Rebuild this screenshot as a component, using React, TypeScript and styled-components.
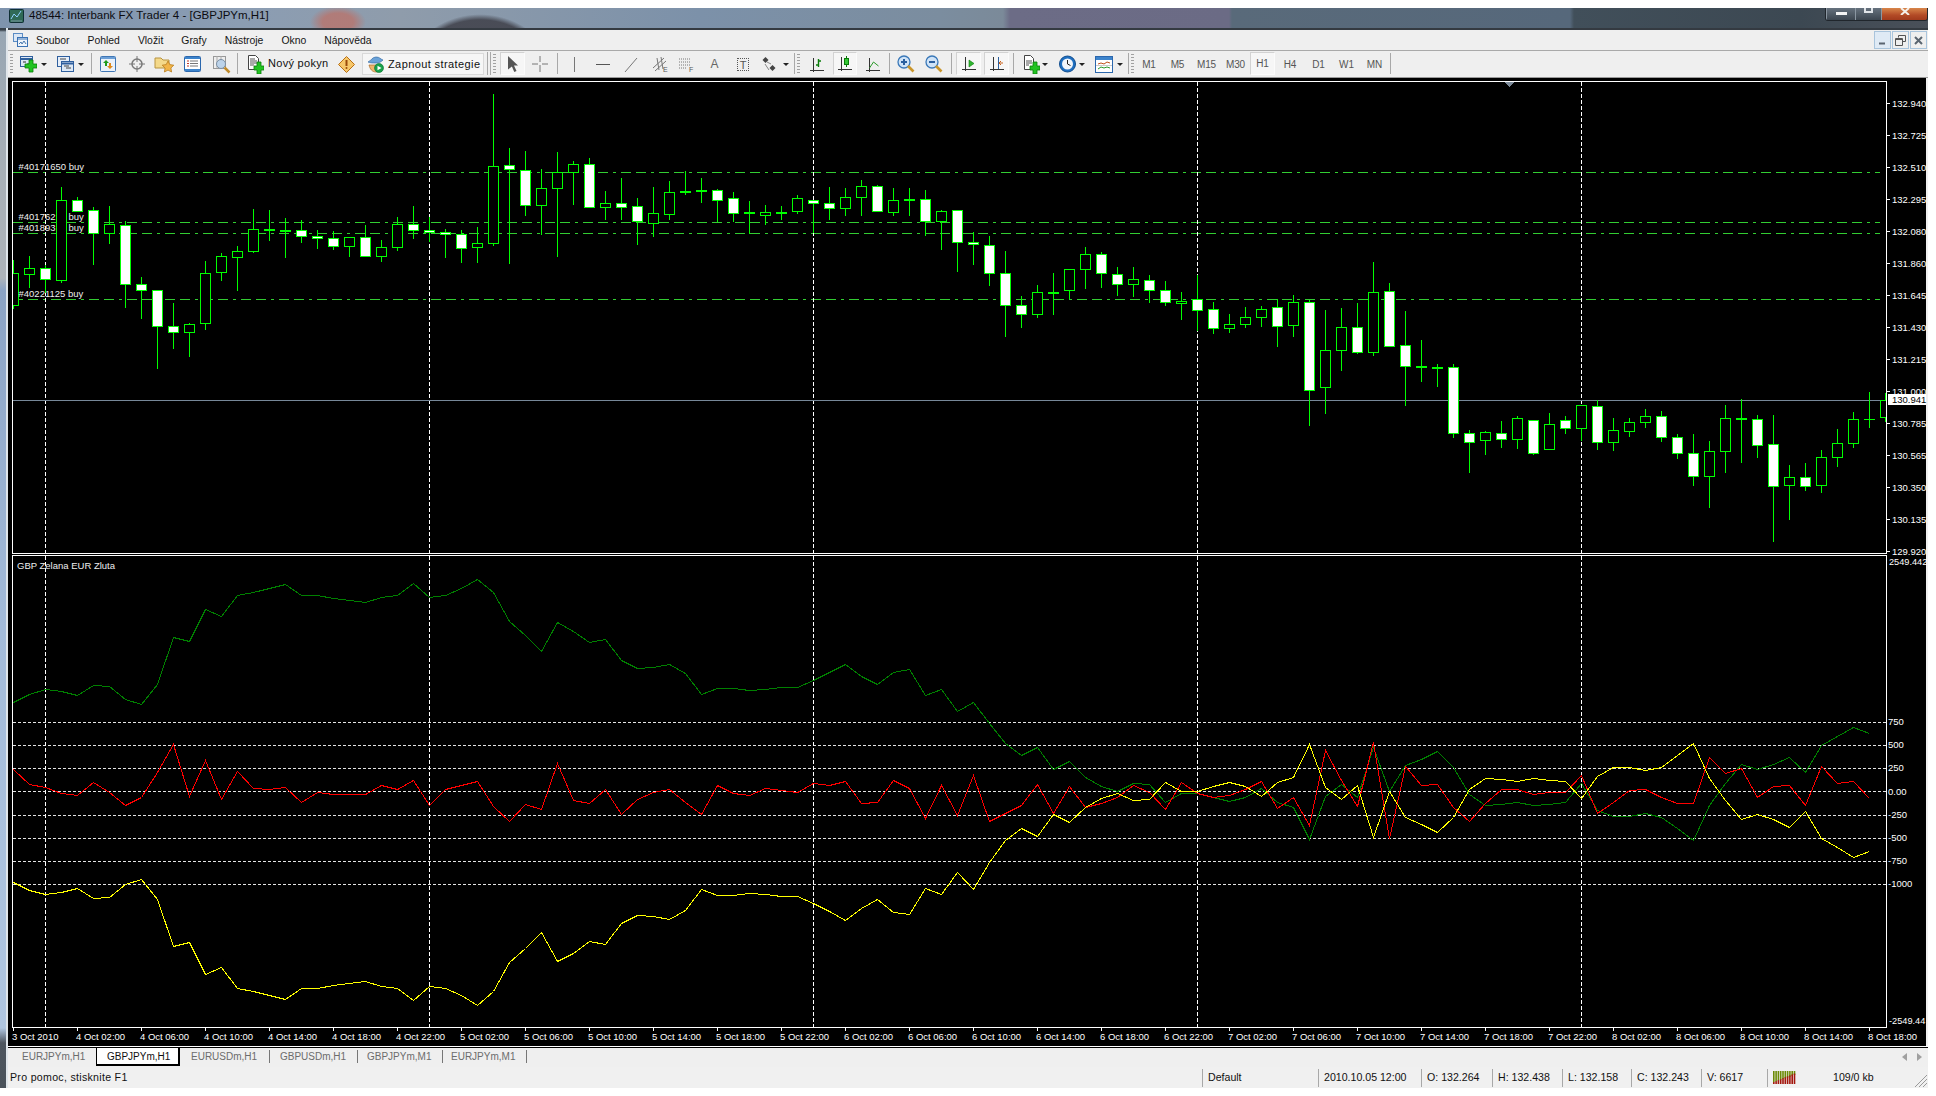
import React from "react";
import styled, { createGlobalStyle } from "styled-components";

const GlobalStyle = createGlobalStyle`
  html, body { margin: 0; padding: 0; background: #fff; }
  body { width: 1936px; height: 1096px; overflow: hidden; font-family: "Liberation Sans", Arial, sans-serif; }
  #root { width: 1936px; height: 1096px; overflow: hidden; padding-top: 8px; box-sizing: border-box; }
`;

/* ---------- chart data: [wick top, wick bottom, body top, body bottom, filled] ---------- */
type C = [number, number, number, number, number];
const A: C[] = [
  [540,688,580,674,0],[528,625,563,581,0],[555,640,563,598,1],[322,608,361,599,0],[352,395,361,392,1],
  [380,555,389,458,1],[378,492,433,460,0],[424,684,436,613,1],[592,717,613,631,1],[631,866,631,739,1],
  [670,807,739,757,1],[730,830,733,757,0],[544,750,580,730,0],[520,603,529,577,0],[499,633,514,532,0],
  [388,519,448,514,0],[391,483,448,451,1],[415,534,451,452,1],[421,489,451,469,1],[451,507,469,475,1],
  [454,510,475,499,1],[472,531,472,499,0],[436,530,472,529,1],[481,546,502,529,0],[412,513,433,502,0],
  [378,477,433,451,1],[410,485,451,457,1],[448,534,457,463,1],[451,549,463,505,1],[442,549,490,502,0],
  [42,497,259,490,0],[205,552,256,268,1],[214,408,271,376,1],[268,465,325,376,0],[217,531,277,325,0],
  [244,375,253,277,0],[235,385,253,382,1],[334,420,370,382,0],[295,420,370,382,1],[355,496,379,424,1],
  [322,470,400,428,0],[304,420,337,401,0],[274,344,334,337,1],[295,369,331,334,1],[328,427,331,361,1],
  [337,427,355,400,1],[364,461,397,400,1],[376,434,397,406,0],[379,420,397,398,1],[346,402,355,394,0],
  [361,460,361,370,1],[322,420,370,385,1],[325,408,352,385,0],[301,408,319,352,0],[316,395,319,394,1],
  [325,408,361,397,0],[325,408,358,361,1],[331,467,358,424,1],[391,510,394,424,0],[391,576,391,487,1],
  [457,555,487,493,1],[469,618,496,580,1],[514,771,580,676,1],[649,744,676,703,1],[616,714,637,703,0],
  [580,705,637,640,1],[568,658,568,631,0],[502,627,523,568,0],[517,624,523,580,1],[562,648,583,613,1],
  [562,651,598,613,0],[586,669,601,631,1],[604,678,631,667,1],[637,720,664,670,0],[586,753,658,691,1],
  [667,762,688,745,1],[703,759,733,745,0],[682,744,712,733,0],[679,741,688,712,0],[658,800,682,739,1],
];
const B: C[] = [
  [106,231,127,196,0],[120,497,127,391,1],[150,461,271,382,0],[145,333,202,271,0],[130,281,202,277,1],
  [7,287,97,277,0],[70,260,94,259,1],[154,437,256,319,1],[241,365,319,322,1],[313,380,322,323,1],
  [313,533,322,520,1],[511,638,520,547,1],[514,584,517,541,0],[484,564,520,538,1],[469,567,475,538,0],
  [481,584,481,580,1],[460,569,493,568,0],[469,521,481,505,1],[436,544,436,505,0],[421,569,439,547,1],
  [475,572,511,547,0],[475,530,487,514,0],[448,503,469,487,0],[454,545,469,532,1],[523,596,532,580,1],
  [523,677,580,649,1],[544,743,574,649,0],[436,638,475,574,0],[418,608,475,476,1],[466,593,478,556,1],
  [466,845,553,679,1],[616,779,652,676,0],[610,692,652,679,1],[571,698,592,676,0],[508,621,550,592,0],
  [457,563,478,550,0],[397,503,476,478,1],[400,485,421,472,0],
];
const toY = (base: number, v: number) => Math.round(base + v / 3);
const candles: C[] = [
  ...A.map((c): C => [toY(80, c[0]), toY(80, c[1]), toY(80, c[2]), toY(80, c[3]), c[4]]),
  ...B.map((c): C => [toY(260, c[0]), toY(260, c[1]), toY(260, c[2]), toY(260, c[3]), c[4]]),
];

const g1 = [455,432,418,423,435,406,409,448,463,402,262,273,178,199,135,127,114,102,135,135,144,150,157,142,135,100,142,135,115,86,125,214,255,304,216,242,277,268,331,354,352,343,370,433,414,414,421,418,412,412,391,367,342,378,402,366,358,436,418,484];
const g2 = [5,70,128,165,140,206,183,230,258,272,250,253,305,280,280,292,304,292,264,305,320,418,288,252,290,140,272,195,177,153,200,283,316,313,307,316,311,307,250,330,349,348,340,350,385,420,316,250,193,207,191,172,217,135,108,82,100];
const r1 = [658,703,712,729,736,697,727,766,741,665,582,739,630,748,664,715,716,711,757,726,733,733,733,706,718,690,766,717,704,693,767,814,763,777,640,751,760,718,792,747,727,718,755,792,705,729,734,715,720,727,700,706,694,760,755,689,715,805,706,795];
const r2 = [225,362,340,315,252,340,257,322,308,290,256,276,328,247,280,290,286,268,243,324,292,375,150,240,317,126,415,198,256,252,322,362,310,268,268,281,277,277,225,340,306,270,268,290,310,310,171,220,205,290,258,255,315,198,250,243,293];
const y1 = [997,1021,1033,1026,1015,1045,1041,1003,988,1048,1188,1177,1273,1252,1315,1324,1336,1348,1315,1315,1306,1300,1294,1309,1315,1351,1309,1315,1336,1365,1324,1237,1195,1147,1234,1208,1174,1183,1120,1096,1099,1108,1081,1018,1036,1036,1030,1033,1039,1039,1060,1083,1110,1073,1048,1085,1093,1015,1033,966];
const y2 = [568,485,420,384,409,343,366,320,294,280,300,298,246,272,272,258,246,258,288,245,230,132,262,298,256,410,274,352,372,397,350,268,235,238,244,235,240,244,295,228,202,202,211,200,165,130,235,300,358,343,358,380,334,415,442,470,452];
const series = (a: number[], b: number[]) =>
  [...a.map((v) => 550 + v / 3), ...b.map((v) => 700 + v / 3)]
    .map((y, i) => `${13.5 + 16 * i},${Math.round(y) + 0.5}`)
    .join(" ");

const grids = [45.5, 429.5, 813.5, 1197.5, 1581.5];
const orderLines = [172, 222, 233, 299];
const levels = [722, 745, 768, 791, 815, 838, 861, 884];
const prices = ["132.940","132.725","132.510","132.295","132.080","131.860","131.645","131.430","131.215","131.000","130.785","130.565","130.350","130.135","129.920"];
const indLabels: [string, number][] = [["750",23],["500",23],["250",23],["0.00",24],["-250",23],["-500",23],["-750",23],["-1000",23]];
const times = ["3 Oct 2010",
  ...["4","5","6","7"].flatMap((d) => ["02","06","10","14","18","22"].map((h) => `${d} Oct ${h}:00`)),
  ...["02","06","10","14","18"].map((h) => `8 Oct ${h}:00`),
];

/* ---------- layout ---------- */
const Shell = styled.div`
  width: 1928px; height: 1080px; display: flex; flex-direction: column; overflow: hidden;
`;
const TitleBar = styled.div`
  height: 20px; flex: none; display: flex; align-items: flex-start; padding-left: 9px; box-sizing: border-box;
  background:
    radial-gradient(ellipse 28px 16px at 338px 14px, rgba(178,122,118,.95) 0 55%, rgba(178,122,118,0) 100%),
    radial-gradient(ellipse 80px 70px at 480px 72px, rgba(70,72,82,0) 0 62%, rgba(70,72,82,.95) 68% 86%, rgba(70,72,82,0) 94%),
    linear-gradient(90deg, #7e93ad 0, #8b9db3 240px, #8f9cab 400px, #7c91a9 700px, #7b8d9f 940px, #7b8a99 1003px, #6c6c86 1010px, #6b6b85 1229px, #596a7a 1232px, #56687b 1570px, #414f5a 1574px, #3c4852 1800px, #4a5059 1928px);
`;
const AppIcon = styled.svg`width: 15px; height: 14px; flex: none; margin-top: 1px;`;
const TitleText = styled.div`
  margin-left: 5px; font-size: 11.5px; line-height: 15px; color: #0c0c10; white-space: nowrap;
`;
const WinButtons = styled.div`
  margin-left: auto; display: flex; height: 12px; border: 1px solid #20262c; border-top: 0;
  border-radius: 0 0 3px 3px; overflow: hidden;
`;
const WinBtn = styled.div<{ $w: number; $bg: string }>`
  width: ${(p) => p.$w}px; height: 100%; background: ${(p) => p.$bg};
  border-left: 1px solid #8b97a2; box-sizing: border-box; display: flex; justify-content: center;
`;
const WinDash = styled.i`width: 11px; height: 3px; background: #f3f3f3; margin-top: 4px;`;
const WinSquare = styled.i`width: 9px; height: 5px; border: 2px solid #e0e4e8; border-top: 0; box-sizing: border-box;`;
const WinClose = styled.svg`width: 12px; height: 7px; flex: none;`;
const Body = styled.div`flex: 1; min-height: 0; display: flex;`;
const LeftFrame = styled.div`
  width: 8px; flex: none; box-sizing: border-box; border-right: 2px solid #dfe5ea;
  background: linear-gradient(180deg, #39424c 0, #39424c 2px, #98a6b3 4px, #a5aeb6 120px, #aeb4ba 250px, #8ba3c4 262px, #a3bbd9 600px, #b0c6e0 1000px, #4d555e 1015px, #4a525b 100%);
`;
const Main = styled.div`flex: 1; min-width: 0; display: flex; flex-direction: column;`;
const MenuBar = styled.div`
  height: 23px; flex: none; box-sizing: border-box; padding: 2px 1px 0 5px; display: flex; align-items: flex-start;
  background: #efefef; border-top: 2px solid #343a41; border-bottom: 1px solid #a9a9a9;
`;
const MenuIcon = styled.svg`width: 15px; height: 15px; margin: 1px 8px 0 0; flex: none;`;
const MenuItems = styled.div`display: flex; gap: 18px; font-size: 10.4px; line-height: 17px; color: #151515; height: 17px;`;
const MdiButtons = styled.div`margin-left: auto; display: flex; gap: 1px; margin-top: -1px;`;
const MdiBtn = styled.div<{ $active?: boolean }>`
  width: 17px; height: 18px; box-sizing: border-box; border: 1px solid #a9c4dc;
  background: ${(p) => (p.$active ? "#dfeaf5" : "#efefef")};
  display: flex; align-items: center; justify-content: center;
`;
const Toolbar = styled.div`
  height: 27px; flex: none; box-sizing: border-box; display: flex; align-items: stretch;
  background: #efefef; border-bottom: 1px solid #9a9a9a;
`;
const Cell = styled.div<{ $w: number }>`
  width: ${(p) => p.$w}px; flex: none; display: flex; align-items: center; justify-content: center;
`;
const Gap = styled.div<{ $w: number }>`width: ${(p) => p.$w}px; flex: none;`;
const Sep = styled.div`width: 1px; flex: none; margin: 2px 0 3px; background: #a8a8a8;`;
const DoubleSep = styled.div`
  width: 4px; flex: none; margin: 1px 0 2px; border-left: 1px solid #a8a8a8; border-right: 1px solid #a8a8a8; box-sizing: border-box;
`;
const Grip = styled.div`
  width: 3px; flex: none; margin: 3px 0 4px;
  background: repeating-linear-gradient(180deg, #a0a0a0 0 1px, transparent 1px 3px);
`;
const Pressed = styled.div<{ $w: number }>`
  width: ${(p) => p.$w}px; flex: none; box-sizing: border-box; margin: 1px 0 2px;
  display: flex; align-items: center; justify-content: center;
  background: #f6f6f6; border: 1px solid #d2d2d2; border-right-color: #fbfbfb; border-bottom-color: #fbfbfb;
`;
const ToolLabel = styled.div`
  width: 60px; flex: none; font-size: 11px; line-height: 25px; color: #111; white-space: nowrap; letter-spacing: .3px;
`;
const StrategyBtn = styled.div`
  width: 122px; flex: none; margin: 2px 0 2px; box-sizing: border-box; display: flex; align-items: center;
  padding-left: 4px; gap: 4px; background: #f6f6f6; border: 1px solid #d9d9d9;
  font-size: 11px; color: #111; white-space: nowrap; letter-spacing: .4px;
`;
const Drop = styled.i`
  width: 0; height: 0; border-left: 3px solid transparent; border-right: 3px solid transparent; border-top: 3px solid #222;
`;
const Frame = styled.div`
  flex: none; height: 968px; width: 1920px; box-sizing: border-box; display: flex; flex-direction: column;
  background: #000; border-right: 2px solid #f0f0f0; padding: 3px 0 0 4px;
`;
const Pane = styled.div<{ $gap?: number }>`
  height: 473px; flex: none; display: flex; margin-top: ${(p) => p.$gap ?? 0}px;
`;
const Plot = styled.div`
  width: 1875px; height: 473px; flex: none; box-sizing: border-box; border: 1px solid #fff;
`;
const PlotSvg = styled.svg`
  display: block; width: 1873px; height: 471px;
  text { font-family: "Liberation Sans", Arial, sans-serif; font-size: 9.5px; fill: #eee; }
`;
const PriceAxis = styled.div`
  width: 39px; flex: none; padding-top: 6px; box-sizing: border-box; position: relative;
  display: flex; flex-direction: column;
`;
const PriceRow = styled.div`
  height: 32px; flex: none; display: flex; align-items: center; font-size: 9.5px; color: #fff; white-space: nowrap;
  &::before { content: ""; width: 3px; height: 1px; background: #fff; margin-right: 2px; flex: none; }
`;
const PriceTag = styled.div`
  position: absolute; left: 1px; right: 0; top: 313px; height: 11px; background: #fff; color: #000;
  font-size: 9.5px; line-height: 11px; padding-left: 4px;
`;
const IndAxis = styled.div`
  width: 39px; flex: none; box-sizing: border-box; display: flex; flex-direction: column;
  font-size: 9.5px; color: #fff; white-space: nowrap;
`;
const IndHead = styled.div<{ $bottom?: boolean }>`
  height: 14px; flex: none; line-height: 14px; padding-left: 2px; font-size: 9.2px;
  margin-top: ${(p) => (p.$bottom ? "auto" : "0")};
  margin-bottom: ${(p) => (p.$bottom ? "0" : "141px")};
`;
const IndRow = styled.div<{ $h: number }>`
  height: ${(p) => p.$h}px; flex: none; display: flex; align-items: center; padding-left: 1px;
`;
const TimeAxis = styled.div`
  height: 18px; flex: none; display: flex; padding-left: 1px; font-size: 9.5px; color: #fff; white-space: nowrap;
`;
const TimeCell = styled.div`
  width: 64px; flex: none; position: relative; line-height: 16px; padding-top: 1px; box-sizing: border-box; text-indent: -1px;
  &::before { content: ""; position: absolute; left: 0; top: 0; width: 1px; height: 3px; background: #fff; }
  &:last-child { width: 54px; }
`;
const TabBar = styled.div`
  height: 21px; flex: none; box-sizing: border-box; display: flex;
  background: #efefef; border-top: 1px solid #fff; box-shadow: inset 0 1px 0 #000; padding-top: 1px;
`;
const Tab = styled.div<{ $w: number; $pl: number; $active?: boolean }>`
  width: ${(p) => p.$w}px; padding-left: ${(p) => p.$pl}px; flex: none; box-sizing: border-box; height: 18px;
  font-size: 10px; line-height: 17px; white-space: nowrap;
  color: ${(p) => (p.$active ? "#101010" : "#6c6c6c")};
  background: ${(p) => (p.$active ? "#fff" : "transparent")};
  border-left: ${(p) => (p.$active ? "1px solid #000" : "0")};
  border-right: ${(p) => (p.$active ? "2px solid #000" : "0")};
  border-bottom: ${(p) => (p.$active ? "2px solid #000" : "0")};
`;
const TabSep = styled.div`width: 1px; flex: none; height: 13px; margin-top: 2px; background: #777;`;
const TabArrows = styled.div`
  margin-left: auto; display: flex; gap: 10px; padding: 5px 6px 0 0;
`;
const ArrowL = styled.i`
  width: 0; height: 0; border-top: 4px solid transparent; border-bottom: 4px solid transparent; border-right: 5px solid #a0a0a0;
`;
const ArrowR = styled.i`
  width: 0; height: 0; border-top: 4px solid transparent; border-bottom: 4px solid transparent; border-left: 5px solid #a0a0a0;
`;
const StatusBar = styled.div`
  height: 21px; flex: none; display: flex; background: #f0f0f0; font-size: 10.6px; line-height: 21px; color: #111; white-space: nowrap;
`;
const StatusMain = styled.div`width: 1194px; flex: none; padding-left: 2px; box-sizing: border-box; letter-spacing: .3px;`;
const StatusCell = styled.div<{ $w: number }>`
  width: ${(p) => p.$w}px; flex: none; box-sizing: border-box; padding-left: 6px; position: relative;
  &::before { content: ""; position: absolute; left: 0; top: 2px; bottom: 1px; width: 1px; background: #a8a8a8; }
`;
const StatusMeter = styled(StatusCell)`display: flex; align-items: center; gap: 37px;`;
const Resize = styled.svg`margin-left: auto; width: 15px; height: 15px; align-self: flex-end;`;
const LetterA = styled.span`font: 12px "Liberation Sans", sans-serif; color: #666;`;
const LetterT = styled.span`
  font: 11px/12px "Liberation Sans", sans-serif; color: #555; width: 12px; height: 13px; text-align: center;
  border: 1px dotted #555; box-sizing: border-box;
`;
const Tf = styled.span`font-size: 10px; color: #555; letter-spacing: -.1px;`;
const IconSvg = styled.svg`flex: none; display: block;`;

/* ---------- icons ---------- */
const Ico = ({ w = 18, h = 18, children }: { w?: number; h?: number; children: React.ReactNode }) => (
  <IconSvg width={w} height={h} viewBox={`0 0 ${w} ${h}`} fill="none">{children}</IconSvg>
);
const Plus = ({ x, y }: { x: number; y: number }) => (
  <path d={`M${x - 2} ${y - 6}h4v4h4v4h-4v4h-4v-4h-4v-4h4z`} fill="#22c322" stroke="#0b7d0b" strokeWidth=".8" />
);
const AddChart = () => (
  <Ico><rect x="1.5" y="1.5" width="12" height="10" fill="#dce8f6" stroke="#2f5f9e" /><path d="M1.5 4h12" stroke="#2f5f9e" strokeWidth="2" /><path d="M4 7h3M8 9h3" stroke="#333" /><Plus x={12} y={11} /></Ico>
);
const Profiles = () => (
  <Ico><rect x="1.5" y="1.5" width="12" height="10" fill="#e6eef8" stroke="#2f5f9e" /><rect x="5.5" y="6.5" width="12" height="10" fill="#dce8f6" stroke="#2f5f9e" /><path d="M5.5 8.5h12" stroke="#2f5f9e" strokeWidth="2" /><path d="M8 11h5M10 13h5M4 4h6" stroke="#444" /></Ico>
);
const Market = () => (
  <Ico w={16} h={17}><rect x=".5" y=".5" width="15" height="15" rx="1" fill="#eaf1fa" stroke="#3f76b5" /><path d="M1 1h14v2H1z" fill="#6c9fd6" /><path d="M6 4l3 3H7v3H5V7H3z" fill="#1e9a1e" /><path d="M10 13l3-3h-2V7H9v3H7z" fill="#e08a1c" /></Ico>
);
const Crosshair = () => (
  <Ico w={16} h={16}><circle cx="8" cy="8" r="5" stroke="#7a7a7a" strokeWidth="1.5" /><path d="M8 0v6M8 10v6M0 8h6M10 8h6" stroke="#777" /></Ico>
);
const FolderStar = () => (
  <Ico w={20} h={18}><path d="M1 3h6l2 2h6v8H1z" fill="#f4d98a" stroke="#b89440" /><path d="M14 6l1.800 3.600 4 .6-2.900 2.800.7 4-3.600-1.900L10.400 17l.7-4-2.900-2.800 4-.6z" fill="#f2b548" stroke="#b97e1e" strokeWidth=".8" /></Ico>
);
const TerminalIco = () => (
  <Ico w={17} h={17}><rect x=".5" y=".5" width="16" height="15" rx="1" fill="#fff" stroke="#2b67ad" /><path d="M1 1h15v2H1zM1 13h15v2H1z" fill="#3d84cc" /><path d="M3 5h2M3 7.500h2M3 10h2" stroke="#c0392b" /><path d="M6 5h8M6 7.500h8M6 10h8" stroke="#777" /></Ico>
);
const Tester = () => (
  <Ico w={19} h={19}><rect x="1.500" y="1.500" width="12" height="12" fill="#eee" stroke="#999" /><path d="M5 1v12M9 1v12" stroke="#aaa" /><circle cx="9" cy="9" r="4.500" fill="#bcd3ea" stroke="#7a8ea3" /><path d="M12.500 12.500l5 5" stroke="#c08a2a" strokeWidth="2.500" /></Ico>
);
const NewOrder = () => (
  <Ico w={17} h={19}><path d="M1.500 .5h7l3 3v11h-10z" fill="#fff" stroke="#444" /><path d="M3 4h5M3 6h7M3 8h7M3 10h4" stroke="#555" /><path d="M10 7h4v4h3v4h-3v4h-4v-4H7v-4h3z" fill="#22c322" stroke="#0b7d0b" strokeWidth=".8" /></Ico>
);
const Diamond = () => (
  <Ico w={17} h={17}><path d="M8.500 .5l8 8-8 8-8-8z" fill="#f6c76a" stroke="#b86f14" /><path d="M8.500 4v6" stroke="#9a4a0a" strokeWidth="2" /><circle cx="8.500" cy="12" r="1" fill="#9a4a0a" /></Ico>
);
const Strategy = () => (
  <Ico w={17} h={17}><path d="M2 9c1 4 3 7 7 7s5-3 5-7z" fill="#efb56c" stroke="#a86a28" strokeWidth=".7" /><path d="M1 6c3-1 4-5 8-5s4 2 7 3c-2 2-4 3-7 3S3 7 1 6z" fill="#6aa2d8" stroke="#3a6ea8" strokeWidth=".7" /><circle cx="12" cy="12" r="4.500" fill="#17a14a" stroke="#0c6e2d" strokeWidth=".6" /><path d="M10.500 9.800l4 2.200-4 2.200z" fill="#fff" /></Ico>
);
const Cursor = () => (
  <Ico w={12} h={17}><path d="M1 1l10 9.500H7l2.500 5.500-2.200 1-2.400-5.600L1 14.500z" fill="#555" /></Ico>
);
const Cross = () => (<Ico w={16} h={16}><path d="M8 0v6M8 9v7M0 8h6M10 8h6" stroke="#777" /></Ico>);
const VLine = () => (<Ico w={3} h={15}><path d="M1.500 0v15" stroke="#777" /></Ico>);
const HLine = () => (<Ico w={14} h={3}><path d="M0 1.500h14" stroke="#555" /></Ico>);
const Trend = () => (<Ico w={14} h={15}><path d="M1 15L13 1" stroke="#777" /></Ico>);
const Channel = () => (
  <Ico w={16} h={16}><path d="M1 12L12 2M3 15L14 5M5 2l2 12M9 1l2 12" stroke="#777" /><text x="11" y="16" fontSize="7" fill="#555" fontFamily="Liberation Sans">E</text></Ico>
);
const Fibo = () => (
  <Ico w={16} h={16}><path d="M1 3h12M1 6h12M1 9h12M1 12h8" stroke="#777" strokeDasharray="1 1" /><text x="11" y="16" fontSize="7" fill="#555" fontFamily="Liberation Sans">F</text></Ico>
);
const Shapes = () => (
  <Ico w={14} h={15}><path d="M3.500 0l3 3-3 3-3-3z" fill="#444" /><path d="M10.500 8l3 3-3 3-3-3z" fill="#444" /><path d="M3 7l4 6M5 5l4 2" stroke="#888" /></Ico>
);
const Axes = () => (<path d="M3.500 1v14M0 13.500h14" stroke="#333" strokeWidth="1" />);
const BarChart = () => (<Ico w={14} h={15}><Axes /><path d="M8.500 2v8M6 8h2.500M8.500 4H11" stroke="#0a7d0a" strokeWidth="1.400" /></Ico>);
const CandleIco = () => (<Ico w={14} h={15}><Axes /><path d="M8.500 0v11" stroke="#0a7d0a" /><rect x="6.500" y="2.500" width="4" height="6" fill="#35c835" stroke="#0a7d0a" /></Ico>);
const LineChart = () => (<Ico w={14} h={15}><Axes /><path d="M3.500 11l4-6 5 4" stroke="#2a9a2a" /></Ico>);
const Zoom = ({ minus }: { minus?: boolean }) => (
  <Ico w={18} h={18}><circle cx="7" cy="7" r="6" fill="#cfe3f7" stroke="#3a78b8" strokeWidth="1.300" /><path d={minus ? "M4 7h6" : "M4 7h6M7 4v6"} stroke="#2a5f9e" strokeWidth="2" /><path d="M11 11l5.500 5.500" stroke="#c9952b" strokeWidth="2.600" /></Ico>
);
const AutoScroll = () => (<Ico w={14} h={15}><Axes /><path d="M7 4l5 3.500-5 3.500z" fill="#2fb52f" stroke="#0a7d0a" strokeWidth=".6" /></Ico>);
const Shift = () => (<Ico w={14} h={15}><Axes /><path d="M8.500 1v12" stroke="#2a5f9e" /><path d="M13 7H9l2-2M9 7l2 2" stroke="#c8601a" /></Ico>);
const NewDoc = () => (
  <Ico w={17} h={19}><path d="M1.500 .5h6l3 3v11h-9z" fill="#fff" stroke="#444" /><path d="M3 6h6M3 8h6M3 10h3" stroke="#555" /><path d="M10 7h4v4h3v4h-3v4h-4v-4H7v-4h3z" fill="#22c322" stroke="#0b7d0b" strokeWidth=".8" /></Ico>
);
const Clock = () => (
  <Ico w={17} h={18}><circle cx="8.500" cy="9" r="8" fill="#1f6fc1" stroke="#144f8e" /><circle cx="8.500" cy="9" r="5.500" fill="#f2f6fb" /><path d="M8.500 5v4l3 1.500" stroke="#222" /></Ico>
);
const Template = () => (
  <Ico w={18} h={17}><rect x=".5" y=".5" width="17" height="16" fill="#fff" stroke="#2b67ad" /><path d="M1 1h16v3H1z" fill="#3d84cc" /><path d="M3 8l3-1 3 1 3-2 3 1" stroke="#c0501a" /><path d="M3 13l3-2 3 1 3-1 3 1" stroke="#2a9a2a" /><path d="M1 9.500h16" stroke="#ccc" /></Ico>
);
const Meter = () => (
  <IconSvg width="23" height="13" viewBox="0 0 23 13">
    {Array.from({ length: 10 }).map((_, i) => (
      <g key={i}>
        <rect x={i * 2.3} y={0} width={1.6} height={13 - (i + 1) * 0.8 - 1} fill="#6c8a06" />
        <rect x={i * 2.3} y={13 - (i + 1) * 0.95 - 1} width={1.6} height={(i + 1) * 0.95 + 1} fill="#a3160c" />
      </g>
    ))}
  </IconSvg>
);

/* ---------- chart panes ---------- */
const MainChart = () => (
  <PlotSvg viewBox="13 82 1873 471" shapeRendering="crispEdges">
    {orderLines.map((y) => (
      <line key={y} x1={13} x2={1880} y1={y + 0.5} y2={y + 0.5} stroke="#32cd32" strokeDasharray="10 5 10 5 3 5" />
    ))}
    {grids.map((x) => (
      <line key={x} x1={x} x2={x} y1={82} y2={553} stroke="#fff" strokeDasharray="4 2" />
    ))}
    <line x1={13} x2={1886} y1={400.5} y2={400.5} stroke="#778899" />
    <path d="M1504 82h10l-5 5z" fill="#7d8b9a" />
    {candles.map((c, i) => {
      const x = 13.5 + 16 * i;
      const thin = c[3] - c[2] < 2;
      return (
        <g key={i}>
          <line x1={x} x2={x} y1={c[0]} y2={c[1]} stroke="#00ff00" />
          {thin ? (
            <rect x={x - 5.5} y={c[2]} width={11} height={Math.max(1, c[3] - c[2] + 1)} fill="#00ff00" />
          ) : (
            <rect x={x - 5} y={c[2] + 0.5} width={10} height={c[3] - c[2]} fill={c[4] ? "#fff" : "#000"} stroke="#00ff00" />
          )}
        </g>
      );
    })}
    <text x={18.5} y={170}>#40171650 buy</text>
    <text x={18.5} y={220}>#401762</text><text x={68.5} y={220}>buy</text>
    <text x={18.5} y={231}>#401893</text><text x={68.5} y={231}>buy</text>
    <text x={18.5} y={297}>#40221125 buy</text>
  </PlotSvg>
);

const IndicatorChart = () => (
  <PlotSvg viewBox="13 556 1873 471" shapeRendering="crispEdges">
    {levels.map((y) => (
      <line key={y} x1={13} x2={1886} y1={y + 0.5} y2={y + 0.5} stroke="#e4e4e4" strokeDasharray="3 2" />
    ))}
    {grids.map((x) => (
      <line key={x} x1={x} x2={x} y1={556} y2={1027} stroke="#fff" strokeDasharray="4 2" />
    ))}
    <polyline points={series(g1, g2)} fill="none" stroke="#008000" />
    <polyline points={series(r1, r2)} fill="none" stroke="#ff0000" />
    <polyline points={series(y1, y2)} fill="none" stroke="#ffff00" />
    <text x={17} y={569}>GBP Zelana EUR Zluta</text>
  </PlotSvg>
);

export default function App() {
  return (
    <>
      <GlobalStyle />
      <Shell>
        <TitleBar>
          <AppIcon viewBox="0 0 15 14">
            <rect x=".5" y=".5" width="14" height="13" rx="1" fill="#2f6a56" stroke="#0f2f35" />
            <path d="M2 10l3-5 3 3 4-6" stroke="#8fd0ff" fill="none" />
            <path d="M2 12h11" stroke="#7f9aa8" />
          </AppIcon>
          <TitleText>48544: Interbank FX Trader 4 - [GBPJPYm,H1]</TitleText>
          <WinButtons>
            <WinBtn $w={29} $bg="linear-gradient(180deg,#66727e,#3c4650)"><WinDash /></WinBtn>
            <WinBtn $w={26} $bg="linear-gradient(180deg,#66727e,#3c4650)"><WinSquare /></WinBtn>
            <WinBtn $w={46} $bg="linear-gradient(180deg,#d8864a,#b24a26 60%,#a03a1c)">
              <WinClose viewBox="0 0 12 7"><path d="M2 0l8 7M10 0L2 7" stroke="#f4f0ea" strokeWidth="2" /></WinClose>
            </WinBtn>
          </WinButtons>
        </TitleBar>
        <Body>
          <LeftFrame />
          <Main>
            <MenuBar>
              <MenuIcon viewBox="0 0 15 15">
                <rect x=".5" y=".5" width="9" height="8" fill="#dbe7f5" stroke="#5b8cc4" />
                <rect x="4.500" y="4.500" width="10" height="9" fill="#eef4fb" stroke="#3a72b4" />
                <path d="M5 6h9" stroke="#3a72b4" />
                <path d="M6 11l2-2 1 2 2-3 2 3" stroke="#4a7ab0" fill="none" />
              </MenuIcon>
              <MenuItems>
                <span>Soubor</span><span>Pohled</span><span>Vložit</span><span>Grafy</span><span>Nástroje</span><span>Okno</span><span>Nápověda</span>
              </MenuItems>
              <MdiButtons>
                <MdiBtn $active><svg width="9" height="9" viewBox="0 0 9 9"><path d="M1 7.500h6" stroke="#5a6570" strokeWidth="2" /></svg></MdiBtn>
                <MdiBtn><svg width="11" height="11" viewBox="0 0 11 11" fill="none"><path d="M3.500 2.500v-2h7v6h-3M.5 3.500h7v7h-7z" stroke="#555" /><path d="M.5 4.500h7" stroke="#555" /></svg></MdiBtn>
                <MdiBtn><svg width="9" height="9" viewBox="0 0 9 9"><path d="M1 1l7 7M8 1L1 8" stroke="#5a6570" strokeWidth="2" /></svg></MdiBtn>
              </MdiButtons>
            </MenuBar>
            <Toolbar>
              <Gap $w={2} /><Grip /><Gap $w={2} />
              <Cell $w={25}><AddChart /></Cell><Cell $w={8}><Drop /></Cell>
              <Gap $w={5} /><Cell $w={24}><Profiles /></Cell><Cell $w={7}><Drop /></Cell>
              <Gap $w={7} /><Sep />
              <Cell $w={32}><Market /></Cell><Cell $w={26}><Crosshair /></Cell><Cell $w={28}><FolderStar /></Cell>
              <Cell $w={29}><TerminalIco /></Cell><Cell $w={29}><Tester /></Cell>
              <Gap $w={1} /><Sep />
              <Gap $w={9} /><Cell $w={17}><NewOrder /></Cell><Gap $w={4} />
              <ToolLabel>Nový pokyn</ToolLabel><Gap $w={2} />
              <Cell $w={32}><Diamond /></Cell>
              <StrategyBtn><Strategy />Zapnout strategie</StrategyBtn>
              <Gap $w={3} /><DoubleSep /><Gap $w={2} /><Grip /><Gap $w={4} />
              <Pressed $w={25}><Cursor /></Pressed>
              <Cell $w={30}><Cross /></Cell><Gap $w={2} /><Sep />
              <Cell $w={32}><VLine /></Cell><Cell $w={25}><HLine /></Cell><Cell $w={32}><Trend /></Cell>
              <Cell $w={25}><Channel /></Cell><Cell $w={28}><Fibo /></Cell>
              <Cell $w={29}><LetterA>A</LetterA></Cell><Cell $w={28}><LetterT>T</LetterT></Cell>
              <Cell $w={24}><Shapes /></Cell><Cell $w={9}><Drop /></Cell>
              <Gap $w={4} /><Sep /><Gap $w={2} /><Grip /><Gap $w={1} />
              <Cell $w={32}><BarChart /></Cell><Pressed $w={24}><CandleIco /></Pressed><Cell $w={32}><LineChart /></Cell>
              <Sep />
              <Cell $w={32}><Zoom /></Cell><Cell $w={23}><Zoom minus /></Cell>
              <Gap $w={6} /><Sep /><Gap $w={4} />
              <Pressed $w={25}><AutoScroll /></Pressed><Gap $w={3} /><Pressed $w={25}><Shift /></Pressed>
              <Gap $w={4} /><Sep /><Gap $w={8} />
              <Cell $w={18}><NewDoc /></Cell><Cell $w={9}><Drop /></Cell>
              <Gap $w={6} /><Cell $w={24}><Clock /></Cell><Cell $w={6}><Drop /></Cell>
              <Gap $w={7} /><Cell $w={24}><Template /></Cell><Cell $w={7}><Drop /></Cell>
              <Gap $w={5} /><Sep /><Gap $w={2} /><Grip /><Gap $w={1} />
              <Cell $w={28}><Tf>M1</Tf></Cell><Cell $w={29}><Tf>M5</Tf></Cell><Cell $w={29}><Tf>M15</Tf></Cell><Cell $w={29}><Tf>M30</Tf></Cell>
              <Pressed $w={25}><Tf>H1</Tf></Pressed>
              <Cell $w={30}><Tf>H4</Tf></Cell><Cell $w={27}><Tf>D1</Tf></Cell><Cell $w={29}><Tf>W1</Tf></Cell><Cell $w={27}><Tf>MN</Tf></Cell>
              <Gap $w={2} /><Sep />
            </Toolbar>
            <Frame>
              <Pane>
                <Plot><MainChart /></Plot>
                <PriceAxis>
                  {prices.map((p) => <PriceRow key={p}>{p}</PriceRow>)}
                  <PriceTag>130.941</PriceTag>
                </PriceAxis>
              </Pane>
              <Pane $gap={1}>
                <Plot><IndicatorChart /></Plot>
                <IndAxis>
                  <IndHead>2549.442</IndHead>
                  {indLabels.map(([t, h]) => <IndRow key={t} $h={h}>{t}</IndRow>)}
                  <IndHead $bottom>-2549.44</IndHead>
                </IndAxis>
              </Pane>
              <TimeAxis>
                {times.map((t) => <TimeCell key={t}>{t}</TimeCell>)}
              </TimeAxis>
            </Frame>
            <TabBar>
              <Tab $w={88} $pl={14}>EURJPYm,H1</Tab>
              <Tab $w={84} $pl={10} $active>GBPJPYm,H1</Tab>
              <Tab $w={89} $pl={11}>EURUSDm,H1</Tab><TabSep />
              <Tab $w={87} $pl={10}>GBPUSDm,H1</Tab><TabSep />
              <Tab $w={84} $pl={9}>GBPJPYm,M1</Tab><TabSep />
              <Tab $w={83} $pl={8}>EURJPYm,M1</Tab><TabSep />
              <TabArrows><ArrowL /><ArrowR /></TabArrows>
            </TabBar>
            <StatusBar>
              <StatusMain>Pro pomoc, stisknite F1</StatusMain>
              <StatusCell $w={116}>Default</StatusCell>
              <StatusCell $w={103}>2010.10.05 12:00</StatusCell>
              <StatusCell $w={71}>O: 132.264</StatusCell>
              <StatusCell $w={70}>H: 132.438</StatusCell>
              <StatusCell $w={69}>L: 132.158</StatusCell>
              <StatusCell $w={70}>C: 132.243</StatusCell>
              <StatusCell $w={66}>V: 6617</StatusCell>
              <StatusMeter $w={120}><Meter /><span>109/0 kb</span></StatusMeter>
              <Resize viewBox="0 0 15 15"><path d="M14 2L2 14M14 6L6 14M14 10l-4 4" stroke="#999" /></Resize>
            </StatusBar>
          </Main>
        </Body>
      </Shell>
    </>
  );
}
